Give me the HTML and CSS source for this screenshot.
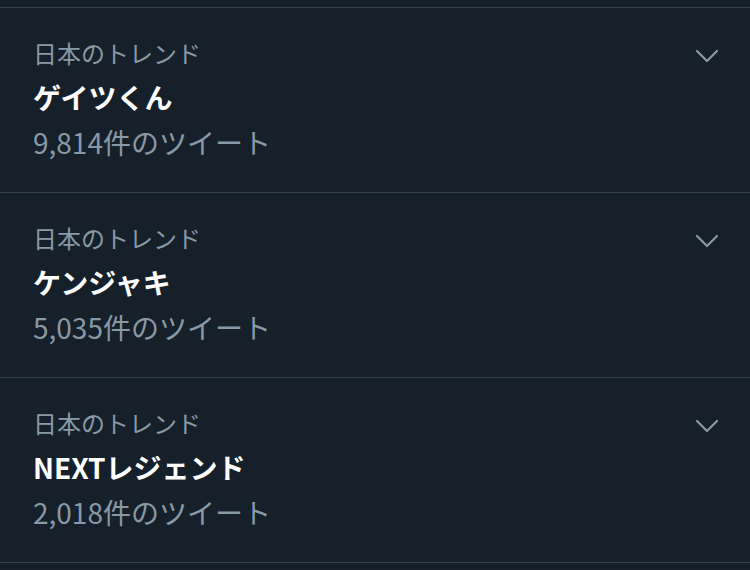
FILE: index.html
```html
<!DOCTYPE html>
<html lang="ja">
<head>
    <meta charset="UTF-8">
    <meta name="viewport" content="width=device-width, initial-scale=1.0">
    <title>トレンド</title>
    <link rel="stylesheet" href="styles.css">
</head>
<body>
    <div class="trends">
        <div class="trend">
            <div class="info">
                <div class="category">日本のトレンド</div>
                <div class="name">ゲイツくん</div>
                <div class="count">9,814件のツイート</div>
            </div>
            <svg class="chevron" viewBox="0 0 24 14" width="24" height="14"><path d="M2 2 L12 12 L22 2" fill="none" stroke="currentColor" stroke-width="2.2" stroke-linecap="round" stroke-linejoin="round"/></svg>
        </div>
        <div class="trend">
            <div class="info">
                <div class="category">日本のトレンド</div>
                <div class="name">ケンジャキ</div>
                <div class="count">5,035件のツイート</div>
            </div>
            <svg class="chevron" viewBox="0 0 24 14" width="24" height="14"><path d="M2 2 L12 12 L22 2" fill="none" stroke="currentColor" stroke-width="2.2" stroke-linecap="round" stroke-linejoin="round"/></svg>
        </div>
        <div class="trend">
            <div class="info">
                <div class="category">日本のトレンド</div>
                <div class="name">NEXTレジェンド</div>
                <div class="count">2,018件のツイート</div>
            </div>
            <svg class="chevron" viewBox="0 0 24 14" width="24" height="14"><path d="M2 2 L12 12 L22 2" fill="none" stroke="currentColor" stroke-width="2.2" stroke-linecap="round" stroke-linejoin="round"/></svg>
        </div>
    </div>
</body>
</html>
```

FILE: styles.css
```css
body {
    margin: 0;
    background-color: #15202b;
    font-family: "Noto Sans CJK JP", "Noto Sans", sans-serif;
    color: #ffffff;
}
.trends {
    margin-top: 7px;
    border-top: 1px solid #38444d;
}
.trend {
    display: flex;
    justify-content: space-between;
    align-items: flex-start;
    height: 185px;
    box-sizing: border-box;
    padding: 23px 31px 0 33px;
    border-bottom: 1px solid #38444d;
}
.info {
    line-height: 44px;
}
.category {
    font-size: 24px;
    color: #8899a6;
}
.name {
    font-size: 28px;
    font-weight: bold;
}
.count {
    font-size: 28px;
    color: #8899a6;
    margin-top: 1px;
}
.chevron {
    color: #8899a6;
    margin-top: 18px;
}
```
